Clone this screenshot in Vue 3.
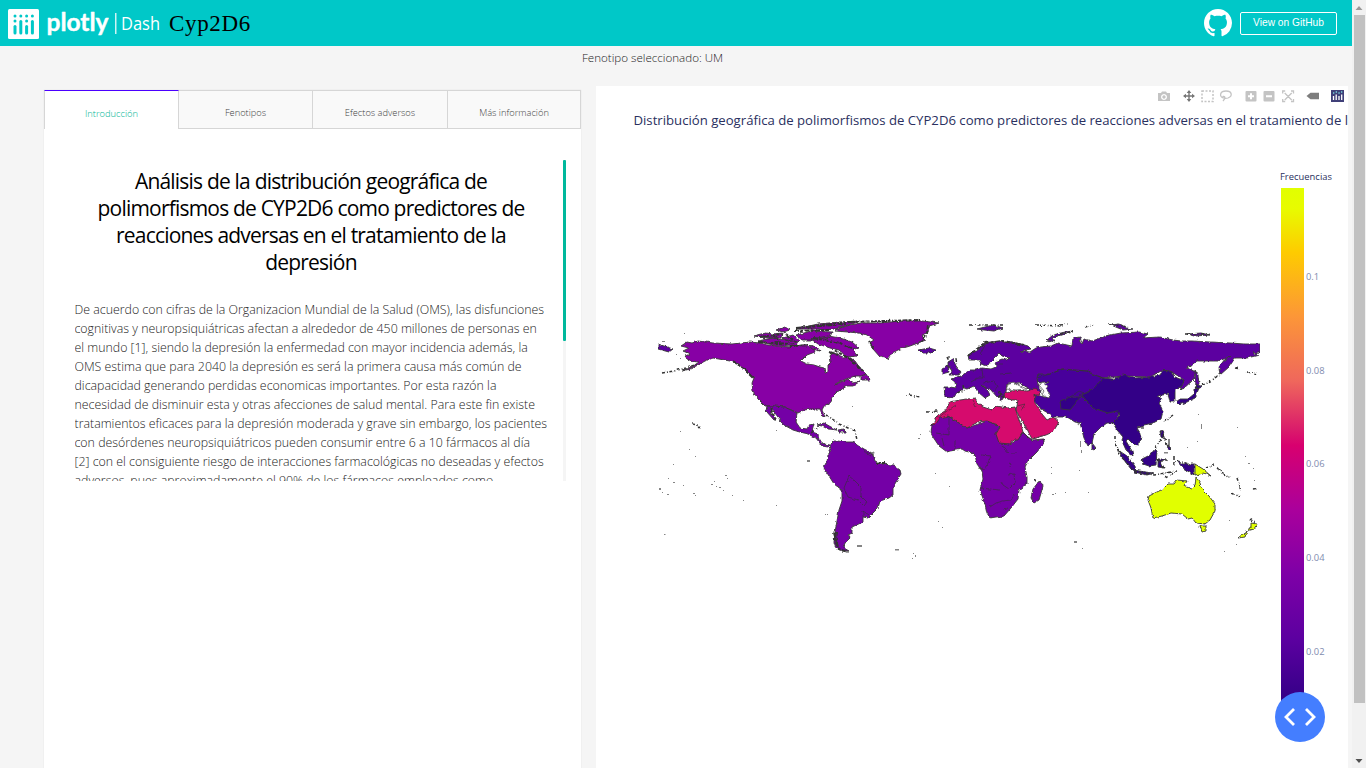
<script setup>
const tabs = ['Introducción', 'Fenotipos', 'Efectos adversos', 'Más información']
const lines = [
  'De acuerdo con cifras de la Organizacion Mundial de la Salud (OMS), las disfunciones',
  'cognitivas y neuropsiquiátricas afectan a alrededor de 450 millones de personas en',
  'el mundo [1], siendo la depresión la enfermedad con mayor incidencia además, la',
  'OMS estima que para 2040 la depresión es será la primera causa más común de',
  'dicapacidad generando perdidas economicas importantes. Por esta razón la',
  'necesidad de disminuir esta y otras afecciones de salud mental. Para este fin existe',
  'tratamientos eficaces para la depresión moderada y grave sin embargo, los pacientes',
  'con desórdenes neuropsiquiátricos pueden consumir entre 6 a 10 fármacos al día',
  '[2] con el consiguiente riesgo de interacciones farmacológicas no deseadas y efectos',
  'adversos, pues aproximadamente el 90% de los fármacos empleados como'
]
const ticks = [['0.1', 276], ['0.08', 370], ['0.06', 463], ['0.04', 557], ['0.02', 651]]

const lands = [
  // Americas
  ['#8700a5', 'M681 346L687 342 692 343 698 341 713 343 732 344 741 343 750 342 760 343 768 345 777 346 789 347 797 345 807 346 813 348 815 352 807 355 801 361 807 364 814 365 820 367 824 368 825 373 828 372 828 365 831 362 830 356 832 353 838 354 843 358 849 357 855 361 860 368 866 373 863 376 855 376 846 379 837 383 834 385 848 379 852 383 859 382 853 386 847 386 842 389 837 392 832 397 831 402 824 406 822 410 825 417 822 416 820 409 811 409 804 410 798 413 791 410 784 407 773 406 765 406 758 399 753 391 752 383 754 378 744 370 739 364 730 361 713 358 705 361 698 365 690 369 682 371 692 367 699 362 689 361 685 356 690 354 683 351 689 348Z'],
  ['#7400a6', 'M767 406L773 406 784 407 791 410 797 413 796 422 800 428 807 429 809 425 814 424 812 432 818 434 819 440 824 444 830 445 828 447 822 446 816 438 808 434 803 433 793 430 784 425 778 417 771 408 771 413 776 420 774 420 766 411Z'],
  ['#7400a6', 'M830 445L834 441 838 441 844 442 853 442 858 445 864 449 872 453 875 461 882 464 893 465 900 470 901 474 896 482 893 487 893 495 889 498 880 501 878 508 872 514 868 518 863 517 863 522 852 527 852 533 848 535 850 538 845 543 844 548 849 551 842 551 836 548 834 542 835 532 837 521 839 510 842 501 842 490 834 484 829 476 824 468 827 462 828 455 831 450Z'],
  ['#8700a5', 'M835 331L840 328 850 325 862 323 880 323 902 321 922 321 939 323 929 326 928 332 922 336 926 340 918 343 910 346 900 349 892 353 888 359 880 357 873 349 869 343 874 340 867 335 859 333 848 332Z'],
  ['#8700a5', 'M796 329L818 324 840 322 862 321 848 325 835 329 824 330 817 329Z M758 341L772 338 787 340 797 342 799 346 786 346 773 345Z M754 336L766 333 773 334 782 333 781 338 768 338Z M796 335L812 331 832 332 830 337 815 340 802 340Z M811 339L828 336 840 338 852 342 859 348 853 350 857 356 847 357 839 350 830 348 818 344Z M776 330L785 327 790 330 783 332Z M783 338L793 335 800 341 791 344Z M861 376L866 374 870 380 861 380Z M809 345L817 347 820 351 812 349Z'],
  ['#7400a6', 'M817 425L824 423 831 427 837 430 828 429 822 426Z M838 430L844 429 847 432 839 432Z'],
  // Europe and Russia
  ['#5c00a0', 'M944 387L950 387 956 388 955 382 951 379 961 376 970 370 976 370 982 368 991 369 996 367 995 362 1002 359 1007 360 1009 358 1002 356 999 353 996 357 990 363 988 366 981 364 978 360 969 360 968 355 978 350 982 344 991 342 1006 341 1021 344 1028 346 1031 349 1020 351 1030 352 1036 348 1041 347 1051 346 1058 343 1067 345 1072 346 1073 338 1080 337 1082 344 1084 339 1092 341 1098 339 1105 336 1121 333 1139 332 1148 334 1143 338 1159 337 1173 340 1181 341 1193 341 1210 342 1230 343 1244 344 1260 344 1260 352 1253 353 1259 355 1247 358 1235 358 1229 367 1220 375 1219 367 1225 359 1231 356 1219 361 1197 361 1187 368 1196 372 1193 380 1183 389 1180 388 1184 380 1172 372 1163 370 1150 377 1123 376 1103 378 1087 374 1063 370 1037 378 1038 386 1042 392 1035 395 1028 388 1020 383 1014 387 1007 384 1006 392 1002 400 998 398 990 389 986 388 982 385 988 391 990 395 985 398 978 392 974 386 967 389 963 388 958 393 952 398 945 397Z'],
  ['#5c00a0', 'M948 362L953 359 956 366 961 372 959 375 949 375 953 370 948 367Z M942 369L948 366 949 372 942 374Z M919 350L929 348 936 350 933 353 922 353Z M1047 340L1053 335 1065 332 1073 331 1064 334 1052 338 1055 342Z M977 329L993 325 1003 328 994 331 984 330Z M658 344L664 346 673 349 669 352 658 349Z'],
  ['#5c00a0', 'M1111 325L1119 324 1126 328 1133 329 1123 330Z M1187 334L1201 333 1210 335 1194 336Z M1195 370L1198 375 1199 384 1196 388Z'],
  // Asia
  ['#48009b', 'M1037 378L1038 374 1050 374 1063 369 1073 370 1087 371 1092 374 1103 378 1110 390 1120 411 1117 421 1113 423 1107 423 1100 428 1094 434 1092 443 1088 446 1084 438 1080 423 1075 422 1067 417 1058 417 1053 417 1048 413 1041 409 1035 401 1034 395 1040 396 1048 398 1045 392 1042 386 1049 382 1043 382 1038 383Z'],
  ['#330087', 'M1103 378L1113 379 1123 375 1134 378 1150 377 1160 375 1163 370 1172 372 1176 378 1184 380 1182 386 1175 390 1175 402 1170 402 1168 394 1157 396 1162 399 1159 403 1163 411 1161 419 1153 423 1144 425 1141 427 1137 428 1142 436 1141 441 1135 446 1128 439 1126 441 1132 451 1133 456 1126 450 1122 441 1123 437 1117 430 1113 423 1120 416 1117 411 1108 413 1093 408 1083 398 1082 395 1093 389Z'],
  ['#330087', 'M1060 401L1070 397 1080 397 1075 404 1070 410 1061 409Z M1176 402L1180 399 1188 399 1194 394 1194 389 1199 388 1195 398 1187 402 1179 405Z M1196 384L1202 387 1197 389Z M1118 450L1127 456 1135 466 1136 472 1131 469 1124 460Z M1142 459L1150 455 1155 449 1157 451 1156 465 1149 466 1143 464Z M1134 470L1145 472 1154 473 1147 475 1134 472Z M1160 431L1164 430 1163 437 1167 440 1161 437Z M1167 445L1171 448 1169 450Z M1158 459L1166 459 1161 461 1164 468 1158 467Z M1177 461L1183 464 1194 464 1194 475 1186 470 1182 467Z'],
  ['#48009b', 'M1092 443L1096 448 1094 450 1092 449Z'],
  // Africa
  ['#7400a6', 'M932 425L940 417 948 416 967 428 987 421 1000 426 996 434 1000 442 1010 444 1018 439 1023 432 1028 437 1032 440 1044 439 1044 443 1037 452 1028 461 1025 467 1027 477 1027 484 1019 490 1018 499 1011 508 1004 516 996 517 990 518 987 513 985 504 980 490 983 479 982 471 977 464 975 455 973 453 965 451 962 449 950 451 947 452 939 446 933 437 931 433Z M1040 480L1043 486 1039 500 1034 503 1031 498 1033 489Z'],
  ['#d60b6d', 'M932 425L938 415 945 411 950 402 960 400 975 398 979 404 983 407 992 410 996 406 1002 407 1008 408 1015 407 1017 414 1021 425 1023 432 1018 440 1013 440 1010 444 999 443 996 434 1000 427 998 425 987 421 978 422 967 428 948 416 940 418 936 424Z'],
  ['#d60b6d', 'M1004 394L1012 391 1019 390 1028 391 1034 388 1041 392 1040 395 1034 395 1035 403 1039 409 1042 414 1047 420 1053 417 1059 422 1053 432 1046 435 1032 439 1026 427 1020 418 1016 410 1018 400 1012 400 1005 398Z'],
  // Oceania
  ['#e1ff00', 'M1149 496L1155 493 1163 489 1168 484 1174 484 1177 480 1187 481 1184 486 1192 489 1195 486 1196 477 1200 483 1202 489 1209 496 1215 504 1215 511 1210 520 1205 524 1196 523 1192 518 1188 519 1182 514 1171 513 1162 516 1153 518 1151 508 1148 500Z M1200 526L1206 526 1206 531 1202 532Z M1195 464L1203 469 1211 476 1204 473 1195 475Z M1251 523L1257 524 1254 529 1247 531 1245 537 1238 538 1244 533 1251 528Z']
]

const borders = [
  'M844 488L849 476 855 481 861 487 861 496 867 502 864 506 858 500 848 497Z M863 517L863 511 869 515 M863 450L868 454 874 452 873 457 864 453',
  'M949 416L949 435 936 433 M981 455L991 456 985 470 978 468 M1008 475L1014 474 1015 483 1009 489 1003 485 1001 481 M980 488L1000 490 M990 507L996 503 1003 501 1011 500 1015 494 M1003 510L1008 508 M1009 463L1011 464 1010 467 M1011 453L1017 453 M942 438L944 446 M955 441L955 450 M1002 445L1008 453 M1023 433L1032 440',
  'M1037 378L1050 374 1063 369 1087 371 1103 378 M1070 397L1079 391 1084 393 1079 395 1085 398 M973 401L976 407 M956 405L947 411 938 418 M1017 406L1025 404 1021 411 M982 369L983 378 978 378 971 382 M983 383L994 381 997 387 994 391 M1000 374L1011 373 M996 364L1003 364 M980 355L985 345'
]

const coasts = [
  'M733 361L740 366 746 371 753 378 M770 408L776 420 M836 532L835 541 839 549 848 552 M834 533L838 547',
  'M968 356L977 349 985 343 1003 341 1024 345 M869 341L874 350 M928 325L927 334 921 342',
  'M796 328L846 324 M794 331L829 330 M806 327L850 322 M850 322L920 320 M760 337L783 334 M758 342L790 344 M790 346L808 345 M813 338L840 343 854 349 M776 336L778 343 M786 334L795 342 M834 350L848 358 M830 352L838 355 M849 358L864 372',
  'M876 463L885 463 M999 391L1004 398 M998 397L1003 394'
]

const strings = [
  'M662 373L674 371 686 368 697 364 M692 424L697 425 700 428 M826 415L837 422 M839 424L855 431 857 440 M811 433L819 427 M909 395L920 397 M927 412L938 411 M1195 388L1210 382 1221 373 M1235 368L1240 369 M1247 372L1259 374 M1115 436L1115 444 1120 452 M1117 452L1134 471 1154 475 1177 471 M1155 448L1163 436 M1163 435L1168 448 M1158 459L1164 469 M1174 457L1174 465 M1177 461L1190 464 M1165 421L1173 415 M1165 478L1174 473 M1158 462L1167 460 M1206 468L1214 465 M1217 468L1229 478 M1237 478L1241 490 M1232 493L1240 497 M1253 490L1258 489 M1250 519L1255 523',
  'M970 325L1003 325 M1035 325L1063 326 M1060 325L1068 324 M1085 327L1093 325 M1108 324L1128 327 M1186 334L1210 334 M1060 334L1073 332 M947 357L950 363 M956 359L957 364 M963 385L964 391 M957 393L964 390 M1034 479L1038 483'
]

const islands = [
  [807,460,3,2],[852,406,1,1],[857,545,5,2],[895,549,4,1.5],[944,341,1,1],[664,534,1.5,1],[776,505,1,1],
  [827,514,1,1],[825,514,1,1],[913,553,1,1],[915,555,1,2],[912,558,1,1],[695,456,1,1],[689,449,1,1],[725,475,2,1],
  [727,478,1,1],[673,482,2,1],[667,494,2,1],[659,488,2,2],[662,492,1,1],[711,484,2,1],[716,486,1,1],[719,487,2,1],
  [723,490,1,1],[693,493,2,1],[695,495,1,1],[743,500,1,1],[732,495,1,1],[776,430,1,1],[918,438,2,1],[920,434,1,1],
  [906,395,1,1],[935,473,1,1],[949,486,1,1],[938,521,1,1],[942,527,1,1],[1052,494,2,1],[1055,493,1,1],[1065,492,1,1],
  [1051,467,1,1],[1051,473,1,1],[1080,441,1,6],[1081,450,1,3],[1079,470,1,1],[1074,541,3,2],[1082,548,1,1],
  [1224,551,1,1],[1236,544,1,1],[1197,441,1,1],[1187,447,1,1],[1201,424,1,5],[1198,414,1,1],[1237,427,1,1],
  [1245,456,1,1],[1248,463,2,1],[1253,468,1,1],[1173,463,1.5,2],[1164,452,4,1.5],[1168,439,2,8],[1141,426,3,3],
  [1088,492,1,1],[1254,480,1,1],[1229,520,1,1],[948,356,2,2],[956,358,1,1],[680,431,1,1],[680,358,1,1],
  [676,354,1,1],[684,333,1,1],[662,341,3,1],[683,485,1,1],[714,481,1,1],[673,464,1,1],[668,478,1,1]
]
</script>

<template>
  <div class="page">
    <div class="content">
      <header class="top">
        <svg class="brand" width="156" height="34" viewBox="0 0 156 34">
          <rect x="0" y="1" width="31" height="30" rx="1.5" fill="#fff" />
          <g fill="#00c8c8">
            <circle cx="7" cy="8" r="1.5" /><circle cx="12.8" cy="8" r="1.5" /><circle cx="18.6" cy="8" r="1.5" /><circle cx="24.4" cy="8" r="1.5" />
            <circle cx="7" cy="13" r="1.5" /><circle cx="18.6" cy="13" r="1.5" />
            <rect x="5.5" y="17" width="3" height="9.5" rx="1.5" /><rect x="11.3" y="12" width="3" height="14.5" rx="1.5" />
            <rect x="17.1" y="17" width="3" height="9.5" rx="1.5" /><rect x="22.9" y="12" width="3" height="14.5" rx="1.5" />
          </g>
          <text x="38.5" y="23" class="plotly" textLength="62" lengthAdjust="spacingAndGlyphs">plotly</text>
          <rect x="107.2" y="5" width="1.2" height="21" fill="#fff" />
          <text x="113" y="21.5" class="dash" textLength="39" lengthAdjust="spacingAndGlyphs">Dash</text>
        </svg>
        <h2 class="app-name">Cyp2D6</h2>
        <svg class="gh" width="28" height="28" viewBox="0 0 16 16">
          <path fill="#fff" d="M8 0C3.58 0 0 3.58 0 8c0 3.54 2.29 6.53 5.47 7.59.4.07.55-.17.55-.38 0-.19-.01-.82-.01-1.49-2.01.37-2.53-.49-2.69-.94-.09-.23-.48-.94-.82-1.13-.28-.15-.68-.52-.01-.53.63-.01 1.08.58 1.23.82.72 1.21 1.87.87 2.33.66.07-.52.28-.87.51-1.07-1.78-.2-3.64-.89-3.64-3.95 0-.87.31-1.59.82-2.15-.08-.2-.36-1.02.08-2.12 0 0 .67-.21 2.2.82.64-.18 1.32-.27 2-.27s1.36.09 2 .27c1.53-1.04 2.2-.82 2.2-.82.44 1.1.16 1.92.08 2.12.51.56.82 1.27.82 2.15 0 3.07-1.87 3.75-3.65 3.95.29.25.54.73.54 1.48 0 1.07-.01 1.93-.01 2.2 0 .21.15.46.55.38A8.01 8.01 0 0 0 16 8c0-4.42-3.58-8-8-8z" />
        </svg>
        <a class="gh-btn">View on GitHub</a>
      </header>
      <div class="selected">Fenotipo seleccionado: UM</div>
      <main class="columns">
        <section class="info">
          <nav class="tabs">
            <div v-for="(t, i) in tabs" :key="t" class="tab" :class="{ active: i === 0 }">{{ t }}</div>
          </nav>
          <div class="scroller">
            <article class="article">
              <h4>Análisis de la distribución geográfica de<br>polimorfismos de CYP2D6 como predictores de<br>reacciones adversas en el tratamiento de la<br>depresión</h4>
              <p><span v-for="l in lines" :key="l" class="line">{{ l }}</span></p>
            </article>
            <div class="track"><div class="thumb"></div></div>
          </div>
        </section>
        <section class="plot">
          <svg width="752" height="682" viewBox="596 86 752 682">
            <defs>
              <linearGradient id="scale" x1="0" y1="1" x2="0" y2="0">
                <stop offset="0" stop-color="#320086" /><stop offset=".125" stop-color="#5c00a0" />
                <stop offset=".25" stop-color="#7e00a7" /><stop offset=".375" stop-color="#aa009c" />
                <stop offset=".5" stop-color="#d8006f" /><stop offset=".53" stop-color="#da1b6b" /><stop offset=".625" stop-color="#ef675c" />
                <stop offset=".75" stop-color="#fc9638" /><stop offset=".875" stop-color="#fecb00" /><stop offset=".96" stop-color="#e8fb00" /><stop offset="1" stop-color="#e1ff00" />
              </linearGradient>
              <clipPath id="frame"><rect x="658" y="315" width="602" height="250" /></clipPath>
              <filter id="rough" x="658" y="310" width="602" height="255" filterUnits="userSpaceOnUse" color-interpolation-filters="sRGB">
                <feTurbulence type="fractalNoise" baseFrequency=".25" numOctaves="2" seed="4" />
                <feDisplacementMap in="SourceGraphic" scale="3.2" xChannelSelector="R" yChannelSelector="G" />
              </filter>
            </defs>
            <g clip-path="url(#frame)">
              <g filter="url(#rough)">
                <g stroke="#383838" stroke-width=".9" stroke-linejoin="round">
                  <path v-for="(l, i) in lands" :key="i" :fill="l[0]" :d="l[1]" />
                </g>
                <path fill="#fff" stroke="#444" stroke-width=".7" d="M1039 385L1043 382 1048 386 1046 389 1050 394 1048 398 1042 395 1044 391Z M1006 389L1009 383 1014 382 1018 385 1027 389 1016 390Z M1014 384L1019 382 1021 384Z" />
                <path v-for="b in borders" :key="b" :d="b" fill="none" stroke="#333" stroke-width=".6" />
                <path v-for="c in coasts" :key="c" :d="c" fill="none" stroke="#333" stroke-width="2" stroke-dasharray="5 1 3 1.5" />
                <path v-for="s in strings" :key="s" :d="s" fill="none" stroke="#333" stroke-width="1.5" stroke-dasharray="3 2 1 1.5" />
              </g>
              <rect v-for="(s, i) in islands" :key="i" :x="s[0]" :y="s[1]" :width="s[2]" :height="s[3]" fill="#444" opacity=".65" />
            </g>

            <text x="633.5" y="125" class="plot-title">Distribución geográfica de polimorfismos de CYP2D6 como predictores de reacciones adversas en el tratamiento de la depresión</text>
            <text x="1280" y="180" class="bar-title" textLength="52">Frecuencias</text>
            <rect x="1281" y="188" width="23" height="515" fill="url(#scale)" />
            <text v-for="t in ticks" :key="t[0]" x="1306" :y="t[1] + 4" class="tick">{{ t[0] }}</text>

            <g fill="#c4c4c4">
              <path fill-rule="evenodd" d="M1158 93h3l1-1.5h4l1 1.5h3v8h-12z M1164 94a3 3 0 1 0 .01 0z M1164 95.3a1.7 1.7 0 1 1-.01 0z" />
              <rect x="1245.5" y="91" width="11" height="10.5" rx="1" /><rect x="1263.5" y="91" width="11" height="10.5" rx="1" />
            </g>
            <path d="M1248 96.2h6M1251 93.2v6M1266 96.2h6" stroke="#fff" stroke-width="2" />
            <path d="M1184 96h10M1189 91v10" stroke="#777" stroke-width="1.4" />
            <path d="M1189 90l2.3 3h-4.6z M1189 102l2.3-3h-4.6z M1183 96l3-2.3v4.6z M1195 96l-3-2.3v4.6z" fill="#777" />
            <rect x="1202" y="91" width="11" height="10.5" fill="none" stroke="#c4c4c4" stroke-width="1.5" stroke-dasharray="2 1.5" />
            <path d="M1223 98C1219 96 1220 91 1226 91C1232 91 1233 96 1228 98C1225 99 1222 98 1223 96.5C1225 96 1226 98 1223 101" fill="none" stroke="#c4c4c4" stroke-width="1.3" />
            <path d="M1282.7 93.5V91h2.5M1291 91h2.5v2.5M1293.5 99v2.5H1291M1285.2 101.5h-2.5V99M1284.7 93l7 7M1291.7 93l-7 7" fill="none" stroke="#c4c4c4" stroke-width="1.3" />
            <path d="M1306.5 96l4-3.2h8.5v6.4h-8.5z" fill="#7d7d7d" />
            <rect x="1331" y="90" width="13" height="12" fill="#3f3f78" />
            <path d="M1333.5 96v4M1336.2 94.5v5.5M1339 96v4M1341.7 94.5v5.5" stroke="#fff" stroke-width="1.3" />
            <path d="M1333 93h1.3M1335.7 92h1.3M1338.4 93h1.3M1341 92h1.3" stroke="#77d5dc" stroke-width="1.3" />
          </svg>
        </section>
      </main>
    </div>
    <aside class="page-scroll">
      <svg width="14" height="15" viewBox="0 0 14 15"><path d="M3.5 10h7l-3.5-4z" fill="#999" /></svg>
      <div class="page-thumb"></div>
      <svg class="down" width="14" height="15" viewBox="0 0 14 15"><path d="M3.5 6h7l-3.5 4z" fill="#505050" /></svg>
    </aside>
    <button class="debug">
      <svg width="50" height="50" viewBox="0 0 50 50"><path d="M19 17l-8 8 8 8M31 17l8 8-8 8" fill="none" stroke="#fff" stroke-width="2.8" /></svg>
    </button>
  </div>
</template>

<style>
html, body { margin: 0; height: 768px; overflow: hidden; }
</style>

<style scoped>
.page { position: relative; display: flex; width: 1366px; height: 768px; overflow: hidden; background: #f5f5f5; font-family: "Open Sans", sans-serif; }
.content { width: 1352px; height: 768px; display: flex; flex-direction: column; }
.top { display: flex; align-items: center; box-sizing: border-box; height: 46px; flex: none; padding: 0 15px 0 8px; background: #00c8c8; }
.brand { display: block; margin-top: 3px; overflow: visible; }
.plotly { font: 700 24px "Lato", sans-serif; fill: #fff; stroke: #fff; stroke-width: .4px; stroke-linejoin: round; }
.dash { font: 400 18.5px "Open Sans", sans-serif; fill: #fff; }
.app-name { margin: 1px auto 0 5px; font: 400 23px/30px "Liberation Serif", serif; letter-spacing: .65px; color: #000; }
.gh { margin-right: 8px; }
.gh-btn { box-sizing: border-box; width: 97px; height: 23px; border: 1px solid #fff; border-radius: 2px; color: #fff; font: 400 10.2px/20px "Liberation Sans", sans-serif; letter-spacing: .02px; text-align: center; }
.selected { height: 40px; flex: none; padding-left: 582px; box-sizing: border-box; font-size: 11.6px; line-height: 24px; font-weight: 300; color: #222; }
.columns { display: flex; align-items: flex-start; gap: 15px; padding-left: 44px; height: 682px; }
.info { width: 537px; height: 678px; margin-top: 4px; background: #fff; box-shadow: 0 0 1px #ddd; }
.tabs { display: grid; grid-template: 39px / 135px 134px 135px 133px; height: 39px; }
.tab { box-sizing: border-box; height: 39px; border: 1px solid #d6d6d6; border-left-width: 0; background: #f9f9f9; text-align: center; font-size: 9.3px; line-height: 44px; font-weight: 300; color: #444; }
.tab.active { border-top-color: #4b00ff; border-left-width: 1px; border-bottom: 0; background: #fff; color: #00b595; line-height: 45px; }
.scroller { display: flex; justify-content: space-between; height: 321px; margin: 31px 15px 0 30.5px; overflow: hidden; }
.article { width: 476px; }
.article h4 { margin: 8px 0 0; width: 473px; text-align: center; font-size: 21px; line-height: 27px; font-weight: 400; letter-spacing: -0.8px; color: #000; white-space: nowrap; }
.article p { margin: 24px 0 0; font-size: 12.36px; line-height: 19px; font-weight: 300; color: #222; }
.line { display: block; white-space: nowrap; }
.track { width: 3px; height: 321px; background: #f5f5f5; }
.thumb { height: 181px; border-radius: 1px; background: #00b89c; }
.plot { width: 752px; height: 682px; background: #fff; }
.plot svg { display: block; }
.plot-title { font: 400 13.17px "Open Sans", sans-serif; fill: #2a3060; }
.bar-title { font: 400 9.4px "Open Sans", sans-serif; fill: #2a3060; }
.tick { font: 400 9.4px "Open Sans", sans-serif; fill: #7f8caf; }
.page-scroll { display: flex; flex-direction: column; width: 14px; height: 768px; background: #f1f1f1; }
.page-scroll svg { display: block; flex: none; }
.page-thumb { width: 11px; height: 688px; margin-left: 2px; background: #c1c1c1; }
.down { margin-top: auto; }
.debug { position: absolute; left: 1275px; top: 692px; width: 50px; height: 50px; border: 0; padding: 0; border-radius: 50%; background: #447eff; }
.debug svg { display: block; }
</style>
